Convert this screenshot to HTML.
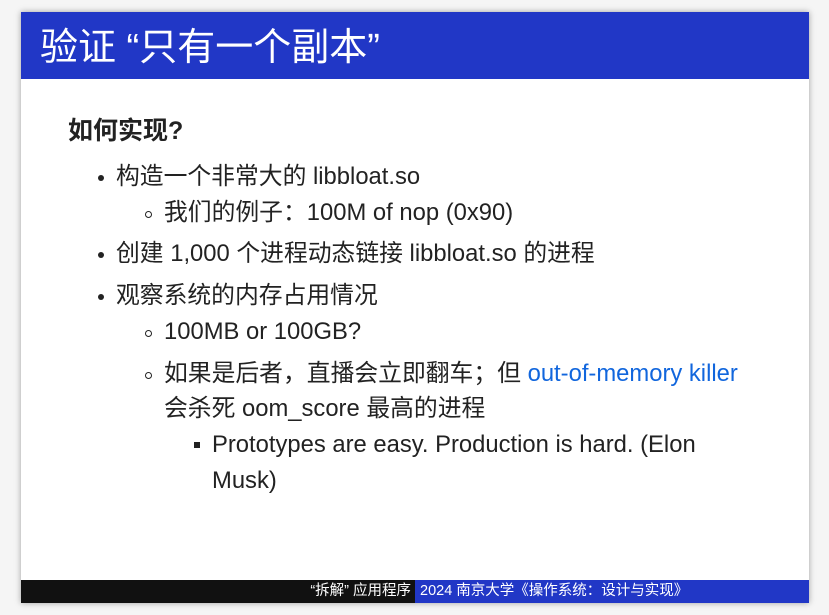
<!DOCTYPE html>
<html><head><meta charset="utf-8"><style>
body{margin:0;width:829px;height:615px;background:#f5f5f5;position:relative;overflow:hidden;font-family:"Liberation Sans","Noto Sans CJK SC",sans-serif;color:#222}
.slide{position:absolute;left:21px;top:12px;width:788px;height:591px;background:#fff;box-shadow:0 0 6px rgba(0,0,0,.35)}
.hd{position:absolute;left:0;top:0;width:788px;height:67px;background:#2137c6;color:#fff;font-size:38px;line-height:73px;padding-left:19px;box-sizing:border-box}
.t{position:absolute;white-space:nowrap;font-size:23.8px;line-height:34px}
.ft{position:absolute;top:568px;height:23px;line-height:23px;font-size:14.5px;color:#fff}
.d{position:absolute;width:6px;height:6px;border-radius:50%;background:#222}
.c{position:absolute;width:7px;height:7px;border-radius:50%;border:1.3px solid #222;box-sizing:border-box}
.s{position:absolute;width:6px;height:6px;background:#222}
a{color:#1166dd;text-decoration:none}
</style></head><body><div class="slide">
<div class="hd">验证 “只有一个副本”</div>
<div class="t" style="left:47px;top:102px;font-weight:bold;font-size:25px">如何实现?</div>
<div class="d" style="left:77px;top:163px"></div><div class="t" style="left:95px;top:148px">构造一个非常大的 libbloat.so</div>
<div class="c" style="left:124px;top:199px"></div><div class="t" style="left:143px;top:184px">我们的例子：100M of nop (0x90)</div>
<div class="d" style="left:77px;top:240px"></div><div class="t" style="left:95px;top:225px">创建 1,000 个进程动态链接 libbloat.so 的进程</div>
<div class="d" style="left:77px;top:282px"></div><div class="t" style="left:95px;top:267px">观察系统的内存占用情况</div>
<div class="c" style="left:124px;top:318px"></div><div class="t" style="left:143px;top:303px">100MB or 100GB?</div>
<div class="c" style="left:124px;top:360px"></div><div class="t" style="left:143px;top:345px">如果是后者，直播会立即翻车；但 <a>out-of-memory killer</a></div>
<div class="t" style="left:143px;top:380px">会杀死 oom_score 最高的进程</div>
<div class="s" style="left:173px;top:430px"></div><div class="t" style="left:191px;top:416px">Prototypes are easy. Production is hard. (Elon</div>
<div class="t" style="left:191px;top:452px">Musk)</div>
<div class="ft" style="left:0;width:394px;background:#111;text-align:right;padding-right:4px;box-sizing:border-box">“拆解” 应用程序</div>
<div class="ft" style="left:394px;width:394px;background:#2137c6;padding-left:5px;box-sizing:border-box">2024 南京大学《操作系统：设计与实现》</div>
</div></body></html>
